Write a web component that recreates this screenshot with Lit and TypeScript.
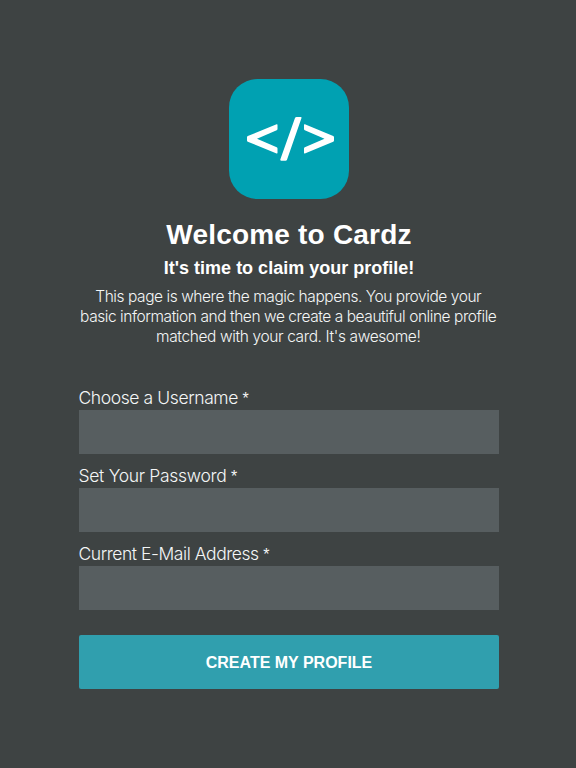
import { LitElement, html, css } from "lit";
import { customElement } from "lit/decorators.js";

const FIELDS = [
  { id: "username", label: "Choose a Username", type: "text" },
  { id: "password", label: "Set Your Password", type: "password" },
  { id: "email", label: "Current E-Mail Address", type: "email" },
];

@customElement("app-root")
export class AppRoot extends LitElement {
  static styles = css`
    :host {
      display: block;
      box-sizing: border-box;
      height: 768px;
      padding: 79px 77px 0 79px;
      background: #3e4343;
      color: #fff;
      font-family: "Liberation Sans", Arial, sans-serif;
      overflow: hidden;
    }
    .logo { display: block; width: 120px; height: 120px; margin: 0 auto; }
    header { text-align: center; }
    h1 { margin: 19px 0 0; font-size: 28px; line-height: 34px; letter-spacing: 0.2px; white-space: nowrap; }
    h2 { margin: 5px 0 0; font-size: 18px; line-height: 22px; white-space: nowrap; }
    p {
      margin: 8px -9px 0 -11px;
      font-family: Inter, "Liberation Sans", sans-serif;
      font-weight: 300;
      font-size: 15.5px;
      line-height: 20px;
      letter-spacing: -0.44px;
      color: #f4f6f6;
      white-space: nowrap;
    }
    p { margin: 8px -9px 0 -10.500px; }
    .last { letter-spacing: -0.38px; }
    form { margin-top: 40px; }
    label {
      display: block;
      height: 23px;
      line-height: 21px;
      font-family: Inter, "Liberation Sans", sans-serif;
      font-weight: 300;
      font-size: 17.5px;
      letter-spacing: -0.36px;
      text-indent: -0.5px;
      color: #f4f6f6;
      white-space: nowrap;
    }
    .username { letter-spacing: -0.4px; }
    .password { letter-spacing: -0.3px; }
    .email { letter-spacing: -0.44px; }
    .star { font-family: "Liberation Sans", Arial, sans-serif; font-size: 16px; line-height: 1; }
    input {
      display: block;
      box-sizing: border-box;
      width: 100%;
      height: 44px;
      margin: 0 0 11px;
      padding: 0 12px;
      border: 0;
      border-radius: 0;
      background: #575e60;
      color: #fff;
    }
    button {
      display: block;
      width: 100%;
      height: 54px;
      margin-top: 25px;
      padding: 2px 0 0;
      border: 0;
      border-radius: 2px;
      background: #309fae;
      color: #fff;
      font: bold 16px/52px "Liberation Sans", Arial, sans-serif;
    }
  `;

  render() {
    return html`
      <header>
        <svg class="logo" viewBox="0 0 120 120">
          <rect width="120" height="120" rx="28.5" fill="#00a1b2" />
          <g fill="#fff">
            <path d="M47.6 45.2q.9-.3.9.6v4.3q0 .8-.8 1.1L28 59.8l19.7 8.5q.8.3.8 1.1v4.4q0 1-.9.6L18.8 62.7q-.8-.3-.8-1.1v-3.4q0-.8.8-1.1z" />
            <path d="M75.9 45.2q-.9-.3-.9.6v4.3q0 .8.8 1.1l19.7 8.6-19.7 8.5q-.8.3-.8 1.1v4.4q0 1 .9.6l28.3-11.7q.8-.3.8-1.1v-3.4q0-.8-.8-1.1z" />
            <path d="M67.7 38h4q1.2 0 .8 1.1L58 80.7q-.4 1-1.4 1h-4.400q-1.3 0-.9-1.1L65.9 39.2q.4-1.2 1.8-1.2z" />
          </g>
        </svg>
        <h1>Welcome to Cardz</h1>
        <h2>It's time to claim your profile!</h2>
        <p>
          <span>This page is where the magic happens. You provide your</span><br />
          <span>basic information and then we create a beautiful online profile</span><br />
          <span class="last">matched with your card. It's awesome!</span>
        </p>
      </header>
      <form>
        ${FIELDS.map(
          (f) => html`<label class=${f.id} for=${f.id}>${f.label} <span class="star">*</span></label
            ><input id=${f.id} type=${f.type} />`,
        )}
        <button type="button">CREATE MY PROFILE</button>
      </form>
    `;
  }
}
